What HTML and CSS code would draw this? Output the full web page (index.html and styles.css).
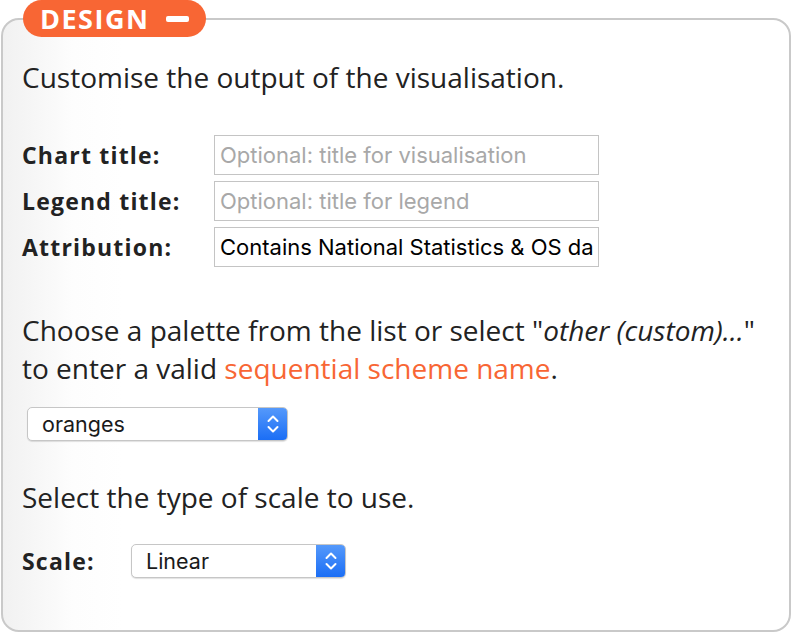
FILE: index.html
```html
<!DOCTYPE html>
<html>
<head>
<meta charset="utf-8">
<link rel="stylesheet" href="styles.css">
</head>
<body>
<section class="panel">
  <div class="badge"><span class="badge-text">DESIGN</span><span class="minus"></span></div>
  <p class="lead">Customise the output of the visualisation.</p>
  <div class="form">
    <label class="label" for="t">Chart title:</label>
    <input class="field" id="t" type="text" placeholder="Optional: title for visualisation">
    <label class="label" for="l">Legend title:</label>
    <input class="field" id="l" type="text" placeholder="Optional: title for legend">
    <label class="label" for="a">Attribution:</label>
    <input class="field" id="a" type="text" value="Contains National Statistics &amp; OS data">
  </div>
  <p class="lead palette">Choose a palette from the list or select "<em>other (custom)...</em>" to enter a valid <span class="link">sequential scheme name</span>.</p>
  <div class="select select-palette">
    <span class="select-value">oranges</span>
    <span class="select-arrow"><svg width="14" height="22" viewBox="0 0 14 22"><path d="M2.5 8 L7 3.5 L11.5 8 M2.5 14 L7 18.5 L11.5 14" fill="none" stroke="#fff" stroke-width="2" stroke-linecap="round" stroke-linejoin="round"/></svg></span>
  </div>
  <p class="lead scale-text">Select the type of scale to use.</p>
  <div class="scale-row">
    <span class="label">Scale:</span>
    <div class="select select-scale">
      <span class="select-value">Linear</span>
      <span class="select-arrow"><svg width="14" height="22" viewBox="0 0 14 22"><path d="M2.5 8 L7 3.5 L11.5 8 M2.5 14 L7 18.5 L11.5 14" fill="none" stroke="#fff" stroke-width="2" stroke-linecap="round" stroke-linejoin="round"/></svg></span>
    </div>
  </div>
</section>
</body>
</html>
```
FILE: styles.css
```css
* { box-sizing: border-box; }
html, body { margin: 0; padding: 0; background: #fff; }
body { font-family: "Open Sans", "Noto Sans", sans-serif; color: #222; }

.panel {
  position: relative;
  margin: 18px 0 0 1px;
  width: 790px;
  height: 614px;
  border: 2px solid #c9c9c9;
  border-radius: 18px;
  background: linear-gradient(to right, #f1f1f1 0px, #fdfdfd 70px, #fff 120px);
  padding: 38px 10px 0 19px;
}

.badge {
  position: absolute;
  left: 20px;
  top: -20px;
  width: 183px;
  height: 37px;
  border-radius: 19px;
  background: #f86634;
  display: flex;
  align-items: center;
  padding-left: 17px;
  gap: 17px;
}
.badge-text {
  color: #fff;
  font-weight: 700;
  font-size: 27px;
  letter-spacing: 1.5px;
  line-height: 1;
}
.minus {
  width: 23px;
  height: 6px;
  border-radius: 2px;
  background: #fff;
}

.lead {
  margin: 0;
  font-size: 28px;
  line-height: 38px;
  color: #222;
}
.lead em { font-style: italic; }
.link { color: #f86634; }

.form {
  margin-top: 39px;
  display: grid;
  grid-template-columns: 192px 385px;
  row-gap: 6px;
  align-items: center;
}
.label {
  font-weight: 700;
  font-size: 23px;
  letter-spacing: 1.2px;
  color: #222;
}
.field {
  height: 40px;
  width: 385px;
  border: 1px solid #c4c4c4;
  padding: 0 5px;
  font-family: Inter, "Liberation Sans", sans-serif;
  font-size: 22px;
  color: #000;
  background: #fff;
  outline: none;
}
.field::placeholder { color: #a8a8a8; }

.palette { margin-top: 44px; }

.select {
  display: flex;
  height: 34px;
  border: 1px solid #c6c6c6;
  border-radius: 5px;
  background: #fff;
  box-shadow: 0 1px 1px rgba(0,0,0,0.12);
  overflow: hidden;
}
.select-value {
  flex: 1;
  padding-left: 14px;
  font-family: Inter, "Liberation Sans", sans-serif;
  font-size: 21.5px;
  line-height: 32px;
  color: #1a1a1a;
}
.select-arrow {
  width: 29px;
  display: flex;
  align-items: center;
  justify-content: center;
  background: linear-gradient(to bottom, #5599fb, #1b6ef5);
}
.select-palette {
  margin: 20px 0 0 5px;
  width: 261px;
}

.scale-text { margin-top: 37px; }

.scale-row {
  margin-top: 28px;
  display: flex;
  align-items: center;
}
.scale-row .label { width: 109px; }
.select-scale { width: 215px; }
```
